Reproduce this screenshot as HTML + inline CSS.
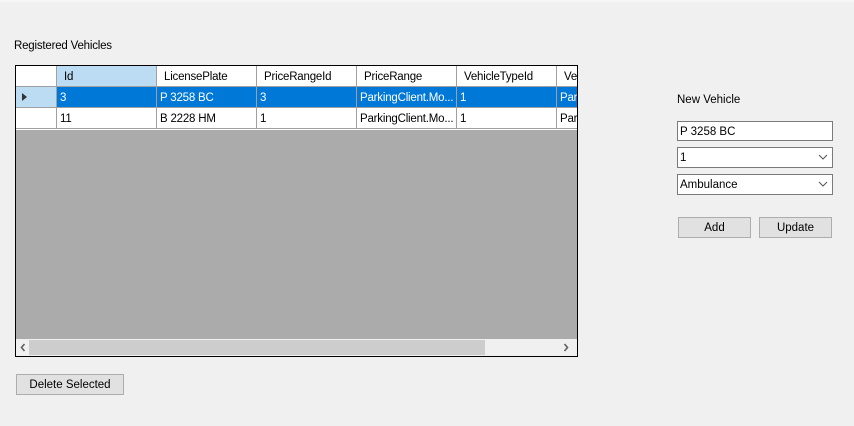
<!DOCTYPE html>
<html><head><style>
body{margin:0;width:854px;height:426px;background:#f0f0f0;font-family:"Liberation Sans",sans-serif;font-size:11.5px;color:#000;position:relative;overflow:hidden}
.a{position:absolute;box-sizing:border-box;white-space:nowrap;overflow:hidden}
.c{position:absolute;box-sizing:border-box;height:21px;line-height:22px;padding-left:3px;overflow:hidden;white-space:nowrap;border-right:1px solid #a0a0a0;border-bottom:1px solid #a0a0a0;letter-spacing:-0.2px}
.btn{position:absolute;box-sizing:border-box;background:#e1e1e1;border:1px solid #adadad;text-align:center;line-height:20px}
.in{position:absolute;box-sizing:border-box;background:#fff;border:1px solid #7a7a7a;line-height:20px;padding-left:2px}
.dd{position:absolute;right:4px;top:6px}
</style></head><body>
<div class="a" style="left:0;top:0;width:854px;height:2px;background:#f7f7f7"></div>
<div class="a" style="left:14px;top:40px;letter-spacing:-0.2px">Registered Vehicles</div>
<div class="a" style="left:15px;top:65px;width:563px;height:292px;border:1px solid #000;background:#ababab">
 <div class="a" style="left:0;top:0;width:561px;height:64px;background:#fff"></div>
 <div class="c" style="left:0;top:0;width:41px"></div>
 <div class="c" style="left:41px;top:0;width:100px;background:#bcdcf4;padding-left:7px">Id</div>
 <div class="c" style="left:141px;top:0;width:100px;padding-left:7px">LicensePlate</div>
 <div class="c" style="left:241px;top:0;width:100px;padding-left:7px">PriceRangeId</div>
 <div class="c" style="left:341px;top:0;width:100px;padding-left:7px">PriceRange</div>
 <div class="c" style="left:441px;top:0;width:100px;padding-left:7px">VehicleTypeId</div>
 <div class="c" style="left:541px;top:0;width:30px;padding-left:7px;border-right:none">Ve</div>
 <div class="c" style="left:0;top:21px;width:41px;background:#bcdcf4"><div class="a" style="left:6px;top:6px;width:0;height:0;border-left:5px solid #333;border-top:4px solid transparent;border-bottom:4px solid transparent"></div></div>
 <div class="c" style="left:41px;top:21px;width:100px;background:#0078d7;color:#fff">3</div>
 <div class="c" style="left:141px;top:21px;width:100px;background:#0078d7;color:#fff">P 3258 BC</div>
 <div class="c" style="left:241px;top:21px;width:100px;background:#0078d7;color:#fff">3</div>
 <div class="c" style="left:341px;top:21px;width:100px;background:#0078d7;color:#fff">ParkingClient.Mo...</div>
 <div class="c" style="left:441px;top:21px;width:100px;background:#0078d7;color:#fff">1</div>
 <div class="c" style="left:541px;top:21px;width:30px;background:#0078d7;color:#fff;border-right:none">Par</div>
 <div class="c" style="left:0;top:42px;width:41px"></div>
 <div class="c" style="left:41px;top:42px;width:100px">11</div>
 <div class="c" style="left:141px;top:42px;width:100px">B 2228 HM</div>
 <div class="c" style="left:241px;top:42px;width:100px">1</div>
 <div class="c" style="left:341px;top:42px;width:100px">ParkingClient.Mo...</div>
 <div class="c" style="left:441px;top:42px;width:100px">1</div>
 <div class="c" style="left:541px;top:42px;width:30px;border-right:none">Par</div>
 <div class="a" style="left:0;top:273px;width:561px;height:17px;background:#f0f0f0">
  <div class="a" style="left:13px;top:1px;width:456px;height:15px;background:#cdcdcd"></div>
  <svg class="a" style="left:4px;top:4px" width="6" height="9"><path d="M4.5 1 L1.5 4.5 L4.5 8" stroke="#606060" stroke-width="1.6" fill="none"/></svg>
  <svg class="a" style="left:547px;top:4px" width="6" height="9"><path d="M1.5 1 L4.5 4.5 L1.5 8" stroke="#606060" stroke-width="1.6" fill="none"/></svg>
 </div>
</div>
<div class="btn" style="left:16px;top:374px;height:21px;width:108px">Delete Selected</div>
<div class="a" style="left:677px;top:94px">New Vehicle</div>
<div class="in" style="left:677px;top:121px;width:156px;height:20px">P 3258 BC</div>
<div class="in" style="left:677px;top:147px;width:156px;height:21px">1<svg class="dd" width="10" height="6"><path d="M1 1 L5 5 L9 1" stroke="#555" fill="none"/></svg></div>
<div class="in" style="left:677px;top:174px;width:156px;height:21px">Ambulance<svg class="dd" width="10" height="6"><path d="M1 1 L5 5 L9 1" stroke="#555" fill="none"/></svg></div>
<div class="btn" style="left:678px;top:217px;width:73px;height:21px">Add</div>
<div class="btn" style="left:759px;top:217px;width:73px;height:21px">Update</div>
</body></html>
